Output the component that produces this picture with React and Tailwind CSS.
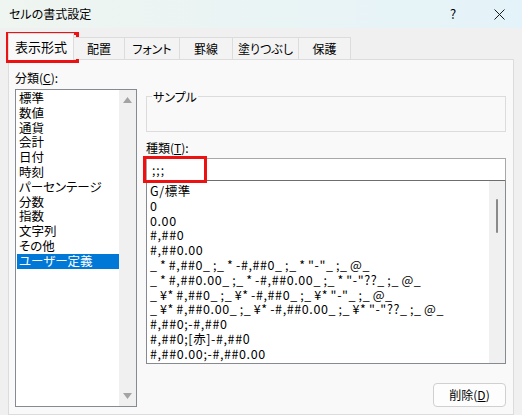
import React from 'react'

const FONT = "font-['Segoe_UI','Noto_Sans_CJK_JP',sans-serif]"

const CATEGORIES = [
  '標準',
  '数値',
  '通貨',
  '会計',
  '日付',
  '時刻',
  'パーセンテージ',
  '分数',
  '指数',
  '文字列',
  'その他',
  'ユーザー定義',
]

const FORMATS = [
  'G/標準',
  '0',
  '0.00',
  '#,##0',
  '#,##0.00',
  '_ * #,##0_ ;_ * -#,##0_ ;_ * "-"_ ;_ @_',
  '_ * #,##0.00_ ;_ * -#,##0.00_ ;_ * "-"??_ ;_ @_',
  '_ ¥* #,##0_ ;_ ¥* -#,##0_ ;_ ¥* "-"_ ;_ @_',
  '_ ¥* #,##0.00_ ;_ ¥* -#,##0.00_ ;_ ¥* "-"??_ ;_ @_',
  '#,##0;-#,##0',
  '#,##0;[赤]-#,##0',
  '#,##0.00;-#,##0.00',
]

const TABS = [
  { label: '表示形式', w: 'w-[66px]' },
  { label: '配置', w: 'w-[51px]' },
  { label: 'フォント', w: 'w-[55px]' },
  { label: '罫線', w: 'w-[53px]' },
  { label: '塗りつぶし', w: 'w-[66px]' },
  { label: '保護', w: 'w-[52px]' },
]

export default function App() {
  return (
    <div
      className={`relative flex h-[415px] w-[522px] flex-col overflow-hidden bg-[#f0f0f0] text-[12px] text-black [font-feature-settings:'palt'] ${FONT}`}
    >
      {/* タイトルバー */}
      <div className="flex h-[28px] shrink-0 items-center bg-gradient-to-r from-[#eff5f0] to-[#e4f3f9] pl-[9px]">
        <span className="flex-1">セルの書式設定</span>
        <span className="w-[46px] text-center text-[13px]">?</span>
        <span className="flex w-[46px] items-center justify-center">
          <svg width="11" height="11" viewBox="0 0 11 11" aria-hidden>
            <path d="M0.5 0.5L10.5 10.5M10.5 0.5L0.5 10.5" stroke="#1a1a1a" strokeWidth="1" />
          </svg>
        </span>
      </div>

      {/* タブ */}
      <div className="relative z-10 flex h-[31px] shrink-0 items-end pl-[8px]">
        {TABS.map((t, i) =>
          i === 0 ? (
            <div
              key={t.label}
              className={`${t.w} -mb-px flex h-[27px] items-center justify-center border border-b-0 border-[#dcdcdc] bg-[#f9f9f9] text-[13px]`}
            >
              {t.label}
            </div>
          ) : (
            <div
              key={t.label}
              className={`${t.w} flex h-[22px] items-center justify-center border border-l-0 border-b-0 border-[#dcdcdc] bg-[#f3f3f3]`}
            >
              {t.label}
            </div>
          )
        )}
      </div>

      {/* パネル */}
      <div className="mx-[8px] flex flex-1 gap-[9px] border border-[#dcdcdc] bg-[#f9f9f9] pl-[6px] pr-[7px]">
        {/* 分類 */}
        <div className="flex w-[122px] flex-col">
          <div className="mt-[10px] leading-[15px]">
            分類(<span className="underline">C</span>):
          </div>
          <div className="mt-[4px] flex h-[318px] border border-[#868a91] bg-white">
            <div className="flex-1 pl-[1px] pt-[1px]">
              {CATEGORIES.map((c) => (
                <div
                  key={c}
                  className={`h-[14.8px] whitespace-nowrap pl-[2px] text-[12.5px] leading-[14.8px] ${
                    c === 'ユーザー定義' ? 'bg-[#0078d7] text-white' : ''
                  }`}
                >
                  {c}
                </div>
              ))}
            </div>
            <div className="flex w-[17px] flex-col items-center justify-between bg-[#f0f0f0] py-[7px]">
              <svg width="9" height="6" viewBox="0 0 9 6" aria-hidden>
                <path d="M4.5 0L9 6H0z" fill="#a3a3a3" />
              </svg>
              <svg width="9" height="6" viewBox="0 0 9 6" aria-hidden>
                <path d="M0 0H9L4.5 6z" fill="#a3a3a3" />
              </svg>
            </div>
          </div>
        </div>

        {/* 右側 */}
        <div className="flex flex-1 flex-col">
          <div className="relative mt-[36px] h-[36px] border border-[#dcdcdc]">
            <span className="absolute -top-[8px] left-[5px] bg-[#f9f9f9] px-[1px] leading-[15px]">サンプル</span>
          </div>
          <div className="mt-[8px] leading-[15px]">
            種類(<span className="underline">T</span>):
          </div>
          <div className="mt-[3px] flex h-[23px] items-center border border-[#a8a8a8] border-b-[#6e6e6e] bg-white pl-[5px] leading-none tracking-[1px]">
            ;;;
          </div>
          <div className="flex h-[183px] border border-t-0 border-[#868a91] bg-white">
            <div className="flex-1 overflow-hidden pl-[3px] pt-[3px]">
              {FORMATS.map((f) => (
                <div
                  key={f}
                  className="h-[14.8px] whitespace-pre text-[12.5px] leading-[14.8px] tracking-[0.6px] [word-spacing:-1px]"
                >
                  {f}
                </div>
              ))}
            </div>
            <div className="flex w-[16px] justify-center bg-[#f0f0f0] pt-[18px]">
              <div className="h-[34px] w-[2px] rounded-full bg-[#8a8a8a]" />
            </div>
          </div>
          <div className="mt-[19px] flex justify-end">
            <button
              type="button"
              className="flex h-[24px] w-[73px] items-center justify-center rounded-[4px] border border-[#d0d0d0] bg-[#fdfdfd]"
            >
              削除(<span className="underline">D</span>)
            </button>
          </div>
        </div>
      </div>

      {/* 赤い強調枠 */}
      <div className="pointer-events-none absolute left-[6px] top-[32px] h-[31px] w-[73px] border-[3px] border-[#ee1111]" />
      <div className="pointer-events-none absolute left-[143px] top-[156px] h-[27px] w-[64px] border-[3px] border-[#ee1111]" />
    </div>
  )
}
